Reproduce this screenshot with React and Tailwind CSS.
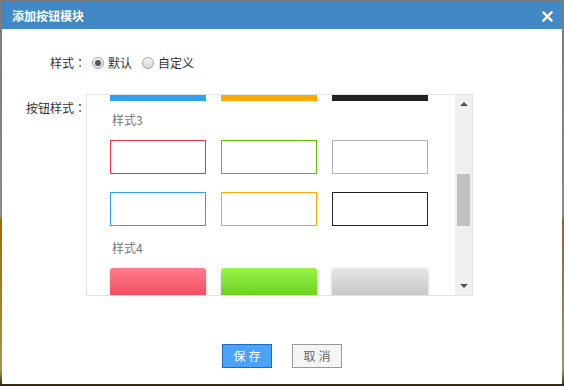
import React from 'react';

const font = { fontFamily: '"Noto Sans CJK SC", "Liberation Sans", sans-serif' };
const colonFont = { fontFamily: '"Noto Sans CJK TC", "Noto Sans CJK SC", sans-serif' };

const outlineRows = [
  ['border-[#e8334a]', 'border-[#5dbf00]', 'border-[#b3b3b3]'],
  ['border-[#2ea1f2]', 'border-[#ffa800]', 'border-[#222222]'],
];

const Radio = ({ checked }) => (
  <span className="w-[12px] h-[12px] rounded-full border border-[#a8a8a8] bg-gradient-to-b from-[#f4f4f4] to-[#d8d8d8] flex items-center justify-center shrink-0">
    {checked && <span className="w-[6px] h-[6px] rounded-full bg-[#555555]" />}
  </span>
);

export default function App() {
  return (
    <div
      className="w-[564px] h-[386px] p-[2px] bg-[linear-gradient(180deg,#7b7b7b_0%,#8a8a8a_56%,#9a6a06_57%,#a49650_96%,#2e2414_100%)] overflow-hidden"
      style={font}
    >
      <div className="w-[560px] h-[382px] bg-white flex flex-col">
        {/* header */}
        <div className="h-[27px] bg-[#4189c6] flex items-center justify-between pl-[10px] pr-[9px]">
          <span className="text-white text-[12px] font-bold leading-none">添加按钮模块</span>
          <svg width="11" height="11" viewBox="0 0 11 11" className="mt-[1px]">
            <path d="M1.5 1.5 L9.5 9.5 M9.5 1.5 L1.5 9.5" stroke="white" strokeWidth="2.4" strokeLinecap="square" />
          </svg>
        </div>

        {/* style row */}
        <div className="flex items-center mt-[24px] h-[20px] text-[12px] text-[#333333]">
          <span className="w-[84px] text-right">样式<span style={colonFont}>：</span></span>
          <span className="ml-[6px] flex items-center gap-[4px]">
            <Radio checked />
            <span>默认</span>
          </span>
          <span className="ml-[10px] flex items-center gap-[4px]">
            <Radio />
            <span>自定义</span>
          </span>
        </div>

        {/* button style row */}
        <div className="flex mt-[21px]">
          <span className="w-[84px] text-right text-[12px] text-[#333333] mt-[4px] leading-[20px]">按钮样式<span style={colonFont}>：</span></span>
          <div className="w-[387px] h-[202px] border border-[#e4e4e4] flex">
            <div className="flex-1 overflow-hidden pl-[23px]">
              <div className="grid grid-cols-[96px_96px_96px] gap-x-[15px] -mt-[28px]">
                <div className="h-[34px] bg-[#2ea1f2]" />
                <div className="h-[34px] bg-[#ffa800]" />
                <div className="h-[34px] bg-[#222222]" />
              </div>

              <div className="mt-[9px] h-[20px] leading-[20px] text-[12px] text-[#777777] pl-[2px]">样式3</div>
              <div className="mt-[10px] grid grid-cols-[96px_96px_96px] gap-x-[15px] gap-y-[18px]">
                {outlineRows.flat().map((c, i) => (
                  <div key={i} className={`h-[34px] border ${c}`} />
                ))}
              </div>

              <div className="mt-[12px] h-[20px] leading-[20px] text-[12px] text-[#777777] pl-[2px]">样式4</div>
              <div className="mt-[10px] grid grid-cols-[96px_96px_96px] gap-x-[15px]">
                <div className="h-[34px] rounded-[3px] bg-gradient-to-b from-[#ff7c8c] to-[#ec4055] shadow-[0_1px_3px_rgba(0,0,0,0.2)]" />
                <div className="h-[34px] rounded-[3px] bg-gradient-to-b from-[#98f548] to-[#62c70f] shadow-[0_1px_3px_rgba(0,0,0,0.2)]" />
                <div className="h-[34px] rounded-[3px] bg-gradient-to-b from-[#e6e6e6] to-[#bfbfbf] shadow-[0_1px_3px_rgba(0,0,0,0.25)]" />
              </div>
            </div>

            {/* scrollbar */}
            <div className="w-[17px] bg-[#f0f0f0] flex flex-col items-center">
              <div className="h-[17px] flex items-center justify-center">
                <svg width="8" height="5" viewBox="0 0 8 5"><path d="M0 5 L4 1 L8 5 Z" fill="#505050" /></svg>
              </div>
              <div className="h-[62px]" />
              <div className="w-[13px] h-[52px] bg-[#c1c1c1]" />
              <div className="flex-1" />
              <div className="h-[17px] flex items-center justify-center">
                <svg width="8" height="5" viewBox="0 0 8 5"><path d="M0 0 L8 0 L4 4 Z" fill="#505050" /></svg>
              </div>
            </div>
          </div>
        </div>

        {/* footer */}
        <div className="flex justify-center gap-[20px] mt-[48px]">
          <button className="w-[50px] h-[24px] bg-[#4aa3f8] border border-[#1a6cc0] text-white text-[12px] tracking-[3px] pl-[3px]">保存</button>
          <button className="w-[50px] h-[24px] bg-[#f5f5f5] border border-[#999999] text-[#666666] text-[12px] tracking-[3px] pl-[3px]">取消</button>
        </div>
      </div>
    </div>
  );
}
